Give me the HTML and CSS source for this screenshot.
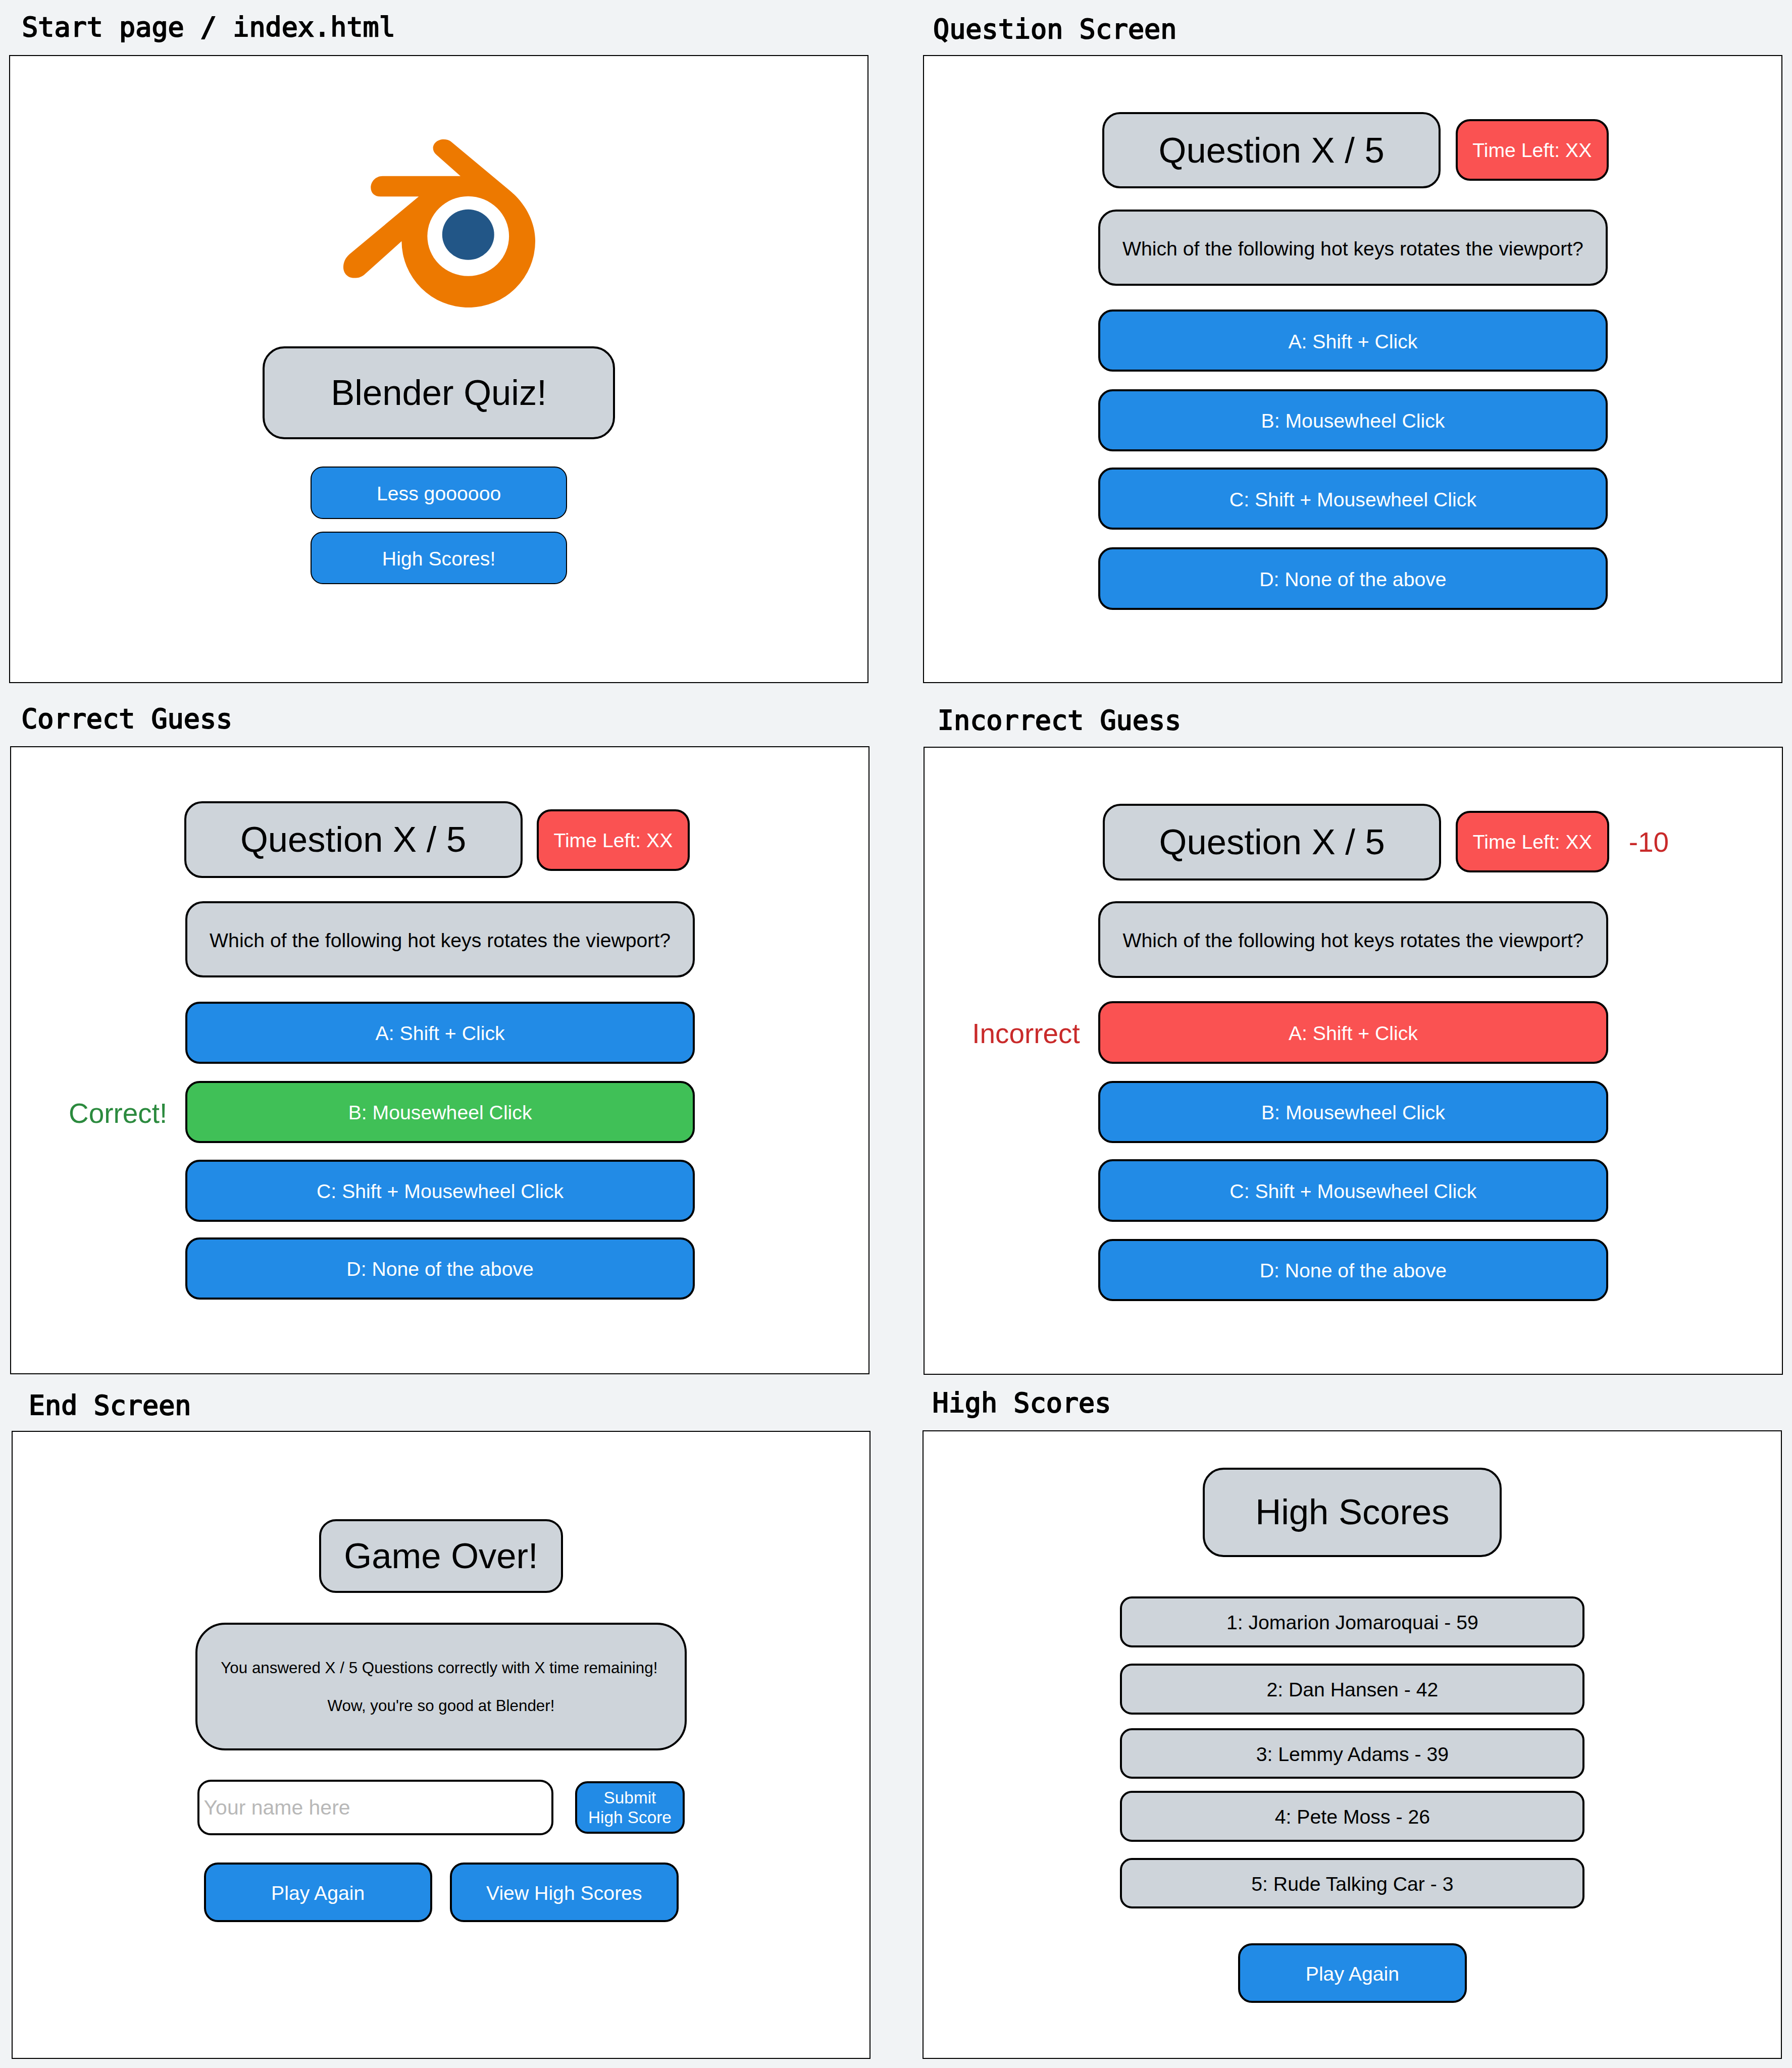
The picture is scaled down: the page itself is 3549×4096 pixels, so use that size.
FILE: index.html
```html
<!DOCTYPE html>
<html lang="en">
<head>
<meta charset="utf-8">
<title>Blender Quiz wireframes</title>
<link rel="stylesheet" href="styles.css">
</head>
<body>
<main class="board">
  <div class="column">
    <section class="screen screen-start">
      <h2 class="label">Start page / index.html</h2>
      <div class="frame">
        <svg class="logo" viewBox="693.8 281.7 388 339.5" role="img" aria-label="Blender logo">
          <path fill="#ed7900" d="M910.7 285.7L1028.5 384C1061 410 1081.5 448 1081.5 487A135 134.5 0 0 1 811.5 487L812.6 486.6L735.3 555.8C728 561.5 720 562.2 713 561.6C699 560 693.8 549 693.8 540C693.8 529 699 520 706.5 513.4L846.1 397.3H769C757 397.3 749.2 390 749.2 379C749.2 367 759 355.8 773 355.8H930.4L882 313C877.500 309 875 304.500 875 299.500C875 290 884 281.700 896.500 281.700C902 281.700 907 283 910.7 285.7Z"/>
          <ellipse fill="#fff" cx="946" cy="477.400" rx="82.500" ry="80.600"/>
          <ellipse fill="#225687" cx="946" cy="474.200" rx="52.500" ry="51"/>
        </svg>
        <h1 class="box panel start-title">Blender Quiz!</h1>
        <button class="box blue start-button">Less goooooo</button>
        <button class="box blue start-button">High Scores!</button>
      </div>
    </section>

    <section class="screen screen-correct">
      <h2 class="label">Correct Guess</h2>
      <div class="frame quiz">
        <div class="quiz-head">
          <div class="box panel counter">Question X / 5</div>
          <div class="box red timer">Time Left: XX</div>
        </div>
        <div class="box panel question">Which of the following hot keys rotates the viewport?</div>
        <div class="answer-row"><span class="note"></span><button class="box blue answer">A: Shift + Click</button></div>
        <div class="answer-row"><span class="note good">Correct!</span><button class="box green answer">B: Mousewheel Click</button></div>
        <div class="answer-row"><span class="note"></span><button class="box blue answer">C: Shift + Mousewheel Click</button></div>
        <div class="answer-row"><span class="note"></span><button class="box blue answer">D: None of the above</button></div>
      </div>
    </section>

    <section class="screen screen-end">
      <h2 class="label">End Screen</h2>
      <div class="frame">
        <div class="box panel over-title">Game Over!</div>
        <div class="box panel message">
          <p class="line line-result">You answered X / 5 Questions correctly with X time remaining!</p>
          <p class="line">Wow, you're so good at Blender!</p>
        </div>
        <div class="name-row">
          <div class="box name-input">Your name here</div>
          <button class="box blue submit">Submit<br>High Score</button>
        </div>
        <div class="end-actions">
          <button class="box blue action">Play Again</button>
          <button class="box blue action">View High Scores</button>
        </div>
      </div>
    </section>
  </div>

  <div class="column">
    <section class="screen screen-question">
      <h2 class="label">Question Screen</h2>
      <div class="frame quiz">
        <div class="quiz-head">
          <div class="box panel counter">Question X / 5</div>
          <div class="box red timer">Time Left: XX</div>
        </div>
        <div class="box panel question">Which of the following hot keys rotates the viewport?</div>
        <div class="answer-row"><span class="note"></span><button class="box blue answer">A: Shift + Click</button></div>
        <div class="answer-row"><span class="note"></span><button class="box blue answer">B: Mousewheel Click</button></div>
        <div class="answer-row"><span class="note"></span><button class="box blue answer">C: Shift + Mousewheel Click</button></div>
        <div class="answer-row"><span class="note"></span><button class="box blue answer">D: None of the above</button></div>
      </div>
    </section>

    <section class="screen screen-incorrect">
      <h2 class="label">Incorrect Guess</h2>
      <div class="frame quiz">
        <div class="quiz-head">
          <div class="box panel counter">Question X / 5</div>
          <div class="box red timer">Time Left: XX</div>
          <span class="penalty">-10</span>
        </div>
        <div class="box panel question">Which of the following hot keys rotates the viewport?</div>
        <div class="answer-row"><span class="note bad">Incorrect</span><button class="box red answer">A: Shift + Click</button></div>
        <div class="answer-row"><span class="note"></span><button class="box blue answer">B: Mousewheel Click</button></div>
        <div class="answer-row"><span class="note"></span><button class="box blue answer">C: Shift + Mousewheel Click</button></div>
        <div class="answer-row"><span class="note"></span><button class="box blue answer">D: None of the above</button></div>
      </div>
    </section>

    <section class="screen screen-scores">
      <h2 class="label">High Scores</h2>
      <div class="frame">
        <div class="box panel scores-title">High Scores</div>
        <div class="box panel score">1: Jomarion Jomaroquai - 59</div>
        <div class="box panel score">2: Dan Hansen - 42</div>
        <div class="box panel score">3: Lemmy Adams - 39</div>
        <div class="box panel score">4: Pete Moss - 26</div>
        <div class="box panel score">5: Rude Talking Car - 3</div>
        <button class="box blue action">Play Again</button>
      </div>
    </section>
  </div>
</main>
</body>
</html>
```

FILE: styles.css
```css
/* 1rem is ten units of the wireframe canvas */
html {
  font-size: 9.8038px;
}

* {
  box-sizing: border-box;
  margin: 0;
}

body {
  background: #f1f3f5;
  color: #000;
  font-family: "Liberation Sans", Arial, sans-serif;
  font-size: 4rem;
  overflow: hidden;
}

.board {
  display: flex;
  width: 362rem;
  height: 417.8rem;
}

.column {
  width: 181rem;
  flex: none;
}

/* Screen captions and frames */
.label {
  font: 5.45rem/1 "DejaVu Sans Mono", monospace;
  -webkit-text-stroke: 2px #000;
  white-space: pre;
}

.frame {
  display: flex;
  flex-direction: column;
  align-items: center;
  width: 173.6rem;
  height: 126.9rem;
  background: #fff;
  box-shadow: inset 0 0 0 2px #000;
}

.screen-start .label { height: 11.15rem; padding: 2.79rem 0 0 4.4rem; }
.screen-start .frame { margin-left: 1.85rem; padding-top: 17.02rem; }

.screen-correct .label { height: 12.66rem; padding: 4.43rem 0 0 4.3rem; }
.screen-correct .frame { margin-left: 2.08rem; padding-top: 11.2rem; }

.screen-end .label { height: 11.44rem; padding: 3.62rem 0 0 5.8rem; }
.screen-end .frame { margin-left: 2.3rem; padding-top: 17.86rem; }

.screen-question .label { height: 11.15rem; padding: 3.2rem 0 0 7.5rem; }
.screen-question .frame { margin-left: 5.48rem; padding-top: 11.48rem; }

.screen-incorrect .label { height: 12.83rem; padding: 4.74rem 0 0 8.4rem; }
.screen-incorrect .frame { margin-left: 5.53rem; padding-top: 11.52rem; }

.screen-scores .label { height: 11.24rem; padding: 2.96rem 0 0 7.35rem; }
.screen-scores .frame { margin-left: 5.4rem; padding-top: 7.46rem; }

/* Rounded boxes */
.box {
  display: flex;
  flex: none;
  align-items: center;
  justify-content: center;
  padding: 0.3rem 0 0;
  border: 4px solid #000;
  border-radius: 2.9rem;
  font-family: inherit;
  font-size: 4rem;
  font-weight: 400;
  line-height: 1.15;
  text-align: center;
  white-space: nowrap;
}

.panel { background: #ced4da; color: #000; }
.blue { background: #228be6; color: #fff; }
.green { background: #40c057; color: #fff; }
.red { background: #fa5252; color: #fff; }

/* Start page */
.logo {
  flex: none;
  width: 38.8rem;
  height: 33.95rem;
  margin-left: 0.25rem;
}

.start-title {
  width: 71.2rem;
  height: 18.7rem;
  margin: 7.88rem 0 2.95rem;
  padding: 0;
  border-radius: 4.4rem;
  font-size: 7.2rem;
}

.start-button {
  width: 51.8rem;
  height: 10.6rem;
  margin-top: 2.6rem;
  border-width: 2px;
  border-radius: 2.5rem;
}

/* Question screens */
.quiz {
  align-items: flex-start;
}

.quiz-head {
  display: flex;
  align-items: center;
}

.counter {
  width: 68.35rem;
  height: 15.45rem;
  padding: 0;
  border-radius: 3.6rem;
  font-size: 7.2rem;
}

.timer {
  width: 30.95rem;
  height: 12.45rem;
  padding-top: 0.25rem;
}

.question {
  width: 102.95rem;
  height: 15.45rem;
  margin-left: 35.35rem;
  border-radius: 3.6rem;
}

.answer-row {
  display: flex;
  align-items: center;
}

.answer {
  width: 102.95rem;
  height: 12.6rem;
}

.note {
  width: 35.35rem;
  flex: none;
  font-size: 5.6rem;
  line-height: 1.15;
}

.good { padding: 0.7rem 0 0 11.8rem; color: #2b8a3e; }
.bad { padding: 0.5rem 0 0 9.85rem; color: #c92a2a; }
.penalty { color: #c92a2a; font-size: 5.6rem; line-height: 1.15; }

.screen-question .quiz-head { margin-left: 36.2rem; gap: 3rem; }
.screen-question .timer { margin-bottom: 0.2rem; }
.screen-question .question { margin-top: 4.25rem; }
.screen-question .answer-row:nth-child(3) { margin-top: 4.75rem; }
.screen-question .answer-row:nth-child(4) { margin-top: 3.5rem; }
.screen-question .answer-row:nth-child(5) { margin-top: 3.22rem; }
.screen-question .answer-row:nth-child(6) { margin-top: 3.55rem; }

.screen-correct .quiz-head { margin-left: 35.1rem; gap: 2.87rem; }
.screen-correct .timer { margin-top: 0.15rem; }
.screen-correct .question { margin-top: 4.72rem; }
.screen-correct .answer-row:nth-child(3) { margin-top: 4.8rem; }
.screen-correct .answer-row:nth-child(4) { margin-top: 3.42rem; }
.screen-correct .answer-row:nth-child(5) { margin-top: 3.33rem; }
.screen-correct .answer-row:nth-child(6) { margin-top: 3.12rem; }

.screen-incorrect .quiz-head { margin-left: 36.26rem; gap: 2.95rem; }
.screen-incorrect .timer { margin-bottom: 0.26rem; }
.screen-incorrect .penalty { margin-left: 1.05rem; padding-top: 0.15rem; }
.screen-incorrect .question { margin-top: 4.25rem; }
.screen-incorrect .answer-row:nth-child(3) { margin-top: 4.75rem; }
.screen-incorrect .answer-row:nth-child(4) { margin-top: 3.47rem; }
.screen-incorrect .answer-row:nth-child(5) { margin-top: 3.25rem; }
.screen-incorrect .answer-row:nth-child(6) { margin-top: 3.48rem; }

/* End screen */
.over-title {
  width: 49.2rem;
  height: 14.9rem;
  padding: 0;
  border-radius: 3.4rem;
  font-size: 7.2rem;
}

.message {
  flex-direction: column;
  gap: 3.79rem;
  width: 99.3rem;
  height: 25.87rem;
  margin-top: 6rem;
  padding-top: 0.1rem;
  border-radius: 6rem;
}

.line {
  font-size: 3.2rem;
  line-height: 3.79rem;
}

.line-result {
  padding-right: 0.75rem;
}

.name-row {
  display: flex;
  align-items: center;
  gap: 4.39rem;
  margin-top: 5.9rem;
}

.name-input {
  justify-content: flex-start;
  width: 71.9rem;
  height: 11.24rem;
  padding: 0 0 0 0.9rem;
  border-radius: 2.7rem;
  background: #fff;
  color: #b8b8b8;
  font-size: 4.18rem;
}

.submit {
  width: 22.2rem;
  height: 10.6rem;
  padding: 0;
  border-radius: 2.5rem;
  font-size: 3.4rem;
  line-height: 4.02rem;
}

.end-actions {
  display: flex;
  gap: 3.58rem;
  margin-top: 5.5rem;
}

.action {
  width: 46.15rem;
  height: 12.03rem;
  border-radius: 2.8rem;
}

/* High scores */
.scores-title {
  width: 60.4rem;
  height: 18.05rem;
  margin-bottom: 8rem;
  padding: 0;
  border-radius: 4.2rem;
  font-size: 7.2rem;
}

.score {
  width: 93.85rem;
  height: 10.27rem;
  border-radius: 2.4rem;
}

.score:nth-child(3) { margin-top: 3.32rem; }
.score:nth-child(4) { margin-top: 2.74rem; }
.score:nth-child(5) { margin-top: 2.43rem; }
.score:nth-child(6) { margin-top: 3.23rem; }
.screen-scores .action { margin-top: 7.04rem; }
```
